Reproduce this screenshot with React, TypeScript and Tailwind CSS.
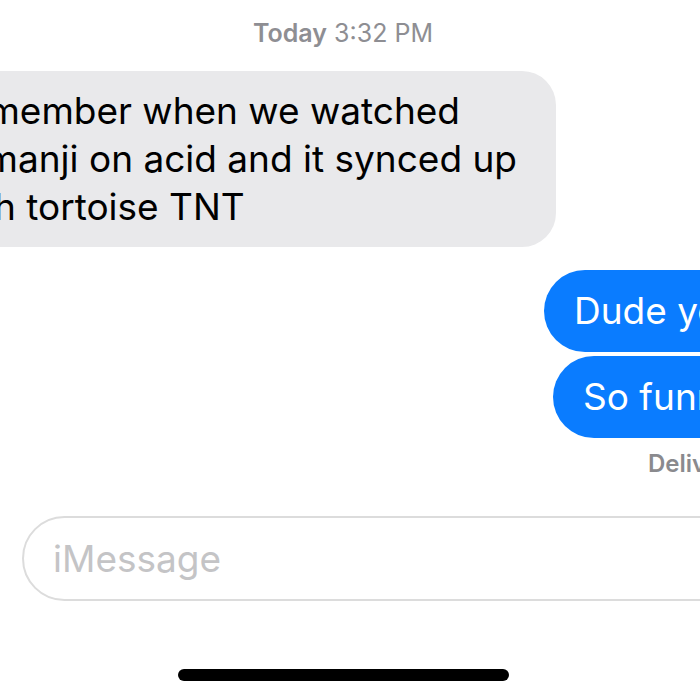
export default function App() {
  const font = { fontFamily: "Inter, 'Liberation Sans', sans-serif" };
  return (
    <div
      className="relative h-[700px] w-[700px] overflow-hidden bg-white font-['Inter','Liberation_Sans',sans-serif] antialiased"
      style={font}
    >
      {/* Timestamp */}
      <div className="w-[686px] pt-[18px] text-center text-[25px] leading-[30px] text-[#8e8e93]">
        <span className="font-semibold">Today</span> <span>3:32 PM</span>
      </div>

      {/* Incoming bubble, cut off on the left */}
      <div className="mt-[23px] flex w-[556px] justify-end">
        <div className="w-max shrink-0 whitespace-nowrap rounded-[34px] bg-[#e9e9eb] py-[16px] pl-[30px] pr-[39px] text-[37px] leading-[48px] text-black">
          <div>Remember when we watched</div>
          <div>Jumanji on acid and it synced up</div>
          <div>with tortoise TNT</div>
        </div>
      </div>

      {/* Outgoing bubbles, cut off on the right */}
      <div className="mt-[23px] flex flex-col gap-[4px]">
        <div className="ml-[544px] w-max whitespace-nowrap rounded-full bg-[#0a7cff] px-[30px] py-[17px] text-[37px] leading-[48px] text-white">
          Dude you're right
        </div>
        <div className="ml-[553px] w-max whitespace-nowrap rounded-full bg-[#0a7cff] px-[30px] py-[17px] text-[37px] leading-[48px] text-white">
          So funny
        </div>
      </div>
      <div className="ml-[648px] mt-[12px] whitespace-nowrap text-[24px] font-semibold leading-[28px] text-[#8a8a8e]">
        Delivered
      </div>

      {/* Input field */}
      <div className="ml-[22px] mt-[38px] flex h-[85px] w-[760px] items-center rounded-[43px] border-2 border-[#dcdcdc] pl-[29px]">
        <span className="text-[37px] leading-[48px] text-[#c4c4c6]">iMessage</span>
      </div>

      {/* Home indicator */}
      <div className="ml-[178px] mt-[68px] h-[12px] w-[331px] rounded-full bg-black" />
    </div>
  );
}
